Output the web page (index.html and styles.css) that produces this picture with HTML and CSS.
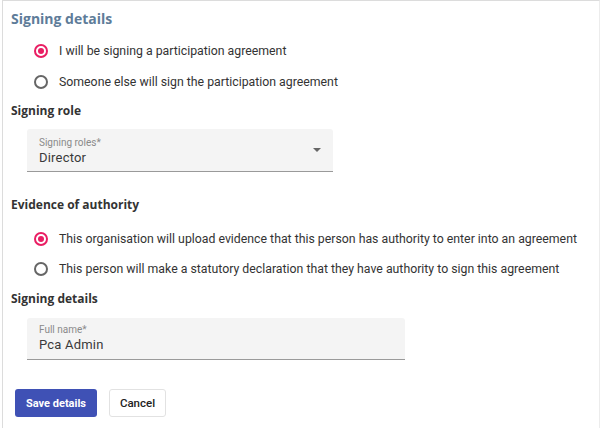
FILE: index.html
```html
<!DOCTYPE html>
<html lang="en">
<head>
  <meta charset="utf-8">
  <title>Signing details</title>
  <link rel="stylesheet" href="styles.css">
</head>
<body>
  <div class="card">
    <h2 class="title">Signing details</h2>

    <div class="radio-group">
      <label class="radio-row">
        <span class="radio checked"></span>
        <span>I will be signing a participation agreement</span>
      </label>
      <label class="radio-row">
        <span class="radio"></span>
        <span>Someone else will sign the participation agreement</span>
      </label>
    </div>

    <h3 class="section">Signing role</h3>
    <div class="field select-field">
      <span class="field-label">Signing roles*</span>
      <span class="field-value">Director</span>
      <span class="arrow"></span>
    </div>

    <h3 class="section evidence">Evidence of authority</h3>
    <div class="radio-group tight">
      <label class="radio-row">
        <span class="radio checked"></span>
        <span>This organisation will upload evidence that this person has authority to enter into an agreement</span>
      </label>
      <label class="radio-row">
        <span class="radio"></span>
        <span>This person will make a statutory declaration that they have authority to sign this agreement</span>
      </label>
    </div>

    <h3 class="section details">Signing details</h3>
    <div class="field name-field">
      <span class="field-label">Full name*</span>
      <span class="field-value">Pca Admin</span>
    </div>

    <div class="actions">
      <button class="btn btn-primary">Save details</button>
      <button class="btn btn-plain">Cancel</button>
    </div>
  </div>
</body>
</html>
```

FILE: styles.css
```css
body {
  margin: 0;
  background: #fff;
  font-family: Roboto, "Liberation Sans", sans-serif;
  color: #333;
}
.card {
  margin-left: 2px;
  width: 598px;
  height: 428px;
  padding: 8px 0 0 8px;
  border-top: 1px solid #dcdcdc;
  border-left: 1px solid #dcdcdc;
  border-right: 1px solid #ececec;
  box-sizing: border-box;
}
.title {
  margin: 0;
  font-family: "Open Sans", sans-serif;
  font-size: 14px;
  font-weight: 700;
  line-height: 20px;
  color: #5e7c99;
}
.radio-group {
  margin-top: 6px;
  padding-left: 23px;
}
.radio-row {
  display: flex;
  align-items: center;
  gap: 11px;
  height: 31px;
  font-size: 12.3px;
  white-space: nowrap;
}
.radio-group.tight {
  margin-top: 9px;
}
.radio-group.tight .radio-row {
  height: 30px;
}
.radio {
  width: 14px;
  height: 14px;
  border: 2px solid #666;
  border-radius: 50%;
  box-sizing: border-box;
  flex: none;
  position: relative;
}
.radio.checked {
  border-color: #e91e63;
}
.radio.checked::after {
  content: "";
  position: absolute;
  left: 2px;
  top: 2px;
  width: 6px;
  height: 6px;
  border-radius: 50%;
  background: #e91e63;
}
.section {
  margin: 4px 0 0;
  font-family: "Open Sans", sans-serif;
  font-size: 12px;
  font-weight: 700;
  line-height: 20px;
  color: #333;
}
.section.evidence {
  margin-top: 23px;
}
.section.details {
  margin-top: 5px;
}
.field {
  position: relative;
  margin: 8px 0 0 16px;
  height: 43px;
  padding: 7px 12px 0;
  box-sizing: border-box;
  background: #f4f4f4;
  border-bottom: 1px solid #9a9a9a;
  border-radius: 3px 3px 0 0;
  display: flex;
  flex-direction: column;
}
.select-field {
  width: 306px;
}
.name-field {
  margin-top: 9px;
  width: 378px;
  height: 42px;
  padding-top: 5px;
}
.field-label {
  font-size: 10px;
  line-height: 13px;
  color: #8a8a8a;
}
.field-value {
  font-size: 13px;
  line-height: 17px;
  color: #3a3a3a;
  letter-spacing: 0.2px;
}
.arrow {
  position: absolute;
  right: 12px;
  top: 19px;
  border-left: 4px solid transparent;
  border-right: 4px solid transparent;
  border-top: 4px solid #666;
}
.actions {
  display: flex;
  gap: 12px;
  margin: 29px 0 0 4px;
}
.btn {
  height: 28px;
  padding: 0;
  border-radius: 3px;
  font-family: Roboto, sans-serif;
  font-size: 11.5px;
  font-weight: 500;
  cursor: pointer;
}
.btn-primary {
  width: 82px;
  background: #3f51b5;
  border: none;
  color: #fff;
  font-size: 11px;
  font-weight: 700;
}
.btn-plain {
  width: 57px;
  background: #fff;
  border: 1px solid #e2e2e2;
  color: #222;
}
```
